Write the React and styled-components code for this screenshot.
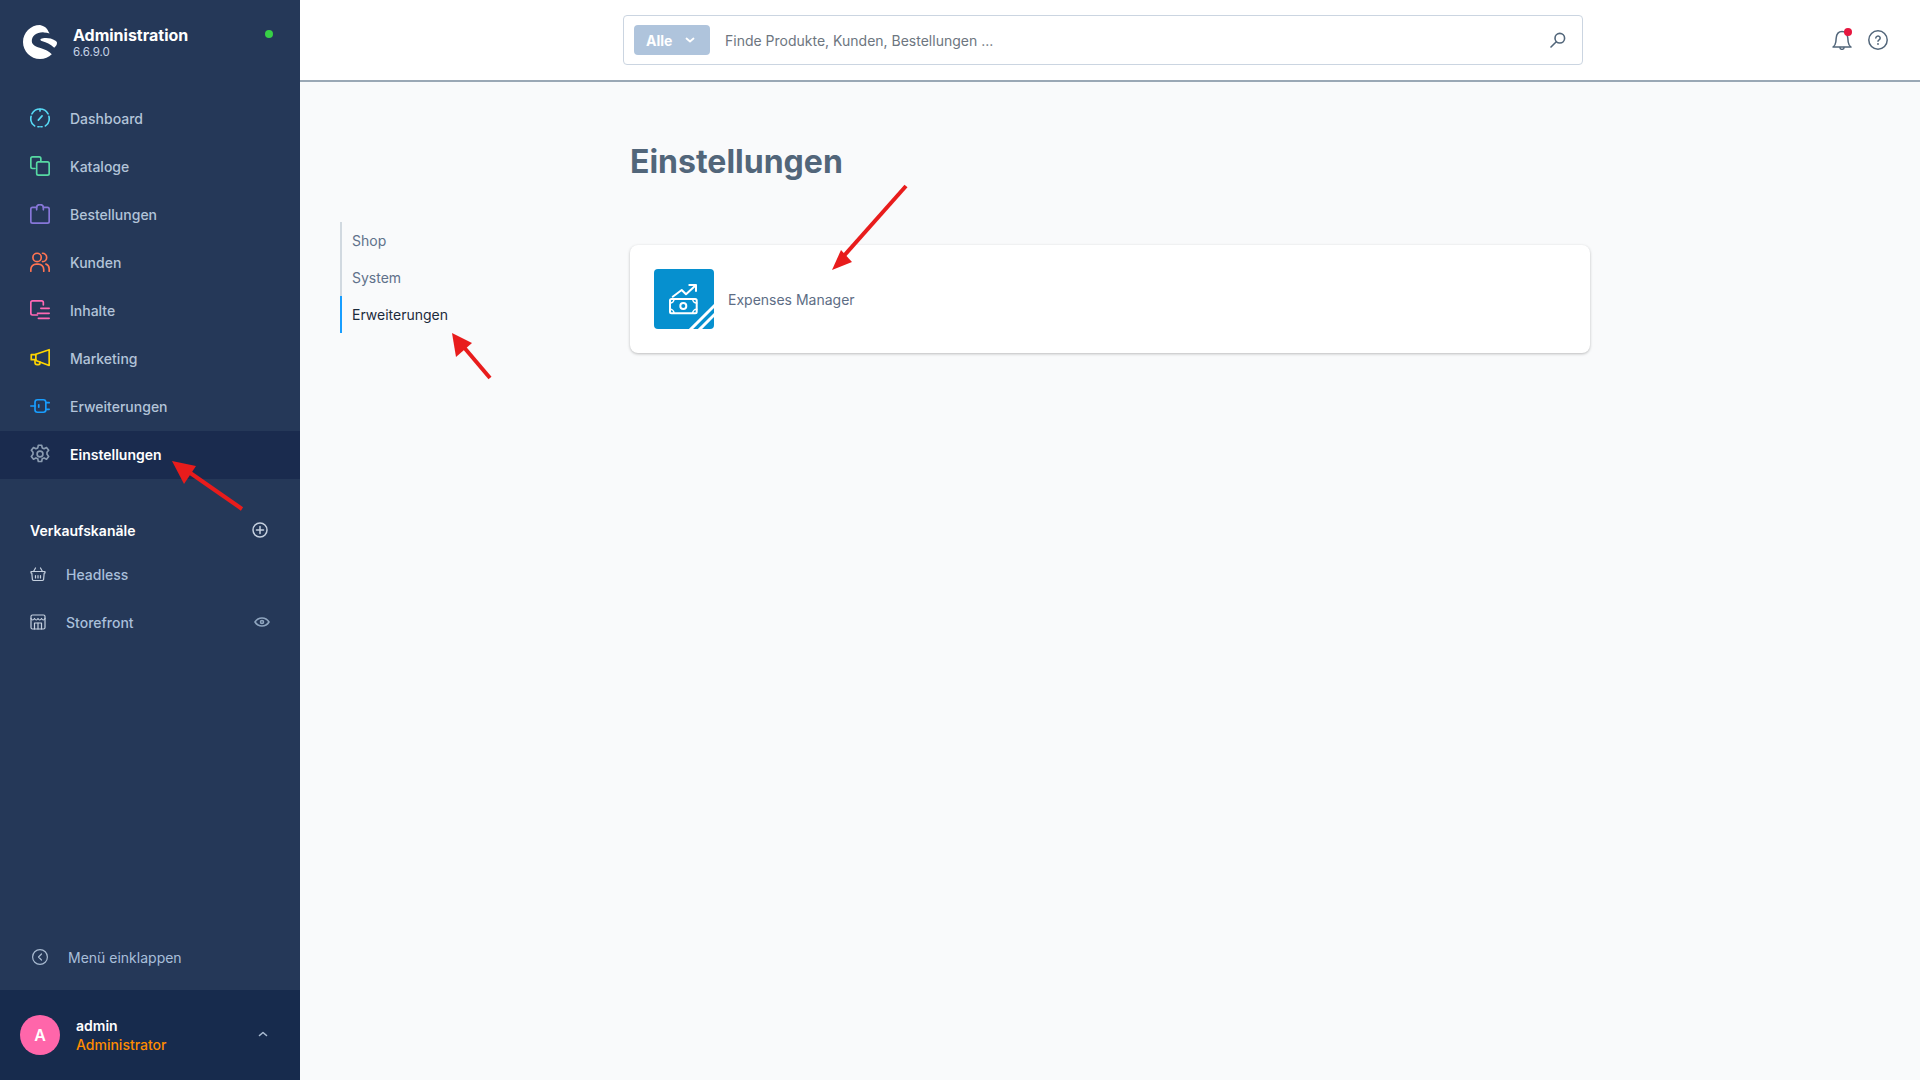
import React from 'react';
import styled, { createGlobalStyle } from 'styled-components';

const GlobalStyle = createGlobalStyle`
    * { box-sizing: border-box; }
    html, body { margin: 0; padding: 0; height: 100%; }
    body {
        font-family: Inter, "Noto Sans", sans-serif;
        background: #f9fafb;
        overflow: hidden;
    }
`;

const Line = ({ children, size = 24, color = 'currentColor', width = 2, view = '0 0 24 24' }) => (
    <svg width={size} height={size} viewBox={view} fill="none" stroke={color} strokeWidth={width} strokeLinecap="round" strokeLinejoin="round">
        {children}
    </svg>
);

const navItems = [
    {
        label: 'Dashboard', color: '#57d9f5',
        icon: <><path d="M5.500 21.500A11 11 0 0 1 1.300 10" /><path d="M2.300 7A11 11 0 0 1 21.700 7" /><path d="M22.700 10A11 11 0 0 1 18.500 21.500" /><path d="M9.500 22.500h1.500" /><path d="M13 22.500h1.500" /><path d="M10 14.500l4.500-5" /><path d="M12 1.500v2" /></>,
    },
    {
        label: 'Kataloge', color: '#57d9a3',
        icon: <><path d="M6 15H3a2 2 0 0 1-2-2V3a2 2 0 0 1 2-2h8a2 2 0 0 1 2 2v3" /><rect x="8" y="7" width="15" height="16" rx="2" /></>,
    },
    {
        label: 'Bestellungen', color: '#8777d9',
        icon: <><path d="M8 4H3a2 2 0 0 0-2 2v15a2 2 0 0 0 2 2h18a2 2 0 0 0 2-2V6a2 2 0 0 0-2-2h-5" /><path d="M8 7V4a3 2.500 0 0 1 8 0v3" /></>,
    },
    {
        label: 'Kunden', color: '#ff7452',
        icon: <><circle cx="8.500" cy="6.500" r="5" /><path d="M1 23v-2a6.500 6.500 0 0 1 6.500-6.500h2.500a6.500 6.500 0 0 1 6.500 6.500v2" /><path d="M15 1.500a5 5 0 0 1 0 10" /><path d="M19 14.500a6 6 0 0 1 4 5.500v3" /></>,
    },
    {
        label: 'Inhalte', color: '#ff68b4',
        icon: <><path d="M9 18H3a2 2 0 0 1-2-2V3a2 2 0 0 1 2-2h11a2 2 0 0 1 2 2v3" /><path d="M13 10h10" /><path d="M9 16h14" /><path d="M10 22h13" /></>,
    },
    {
        label: 'Marketing', color: '#ffd500',
        icon: <><path d="M7 8H1.500v6H7" /><path d="M7 7.500 23 2v19L7 15z" /><path d="M6 15v2.500a2.500 2.500 0 0 0 2.500 2.500H10a2 2 0 0 0 2-2v-1" /></>,
    },
    {
        label: 'Erweiterungen', color: '#189eff',
        icon: <><path d="M1 12h5" /><rect x="6" y="4.500" width="13" height="15" rx="3" /><path d="M19 8h4" /><path d="M19 16h4" /><path d="M10.500 10.500v3" /></>,
    },
    {
        label: 'Einstellungen', color: '#8a9bb0', active: true,
        icon: <><circle cx="12" cy="12" r="3.500" /><path d="M10 1.500h4l.7 3.200 2.200 1 2.900-1.500 2.600 3.300-2 2.500v2.400l2 2.500-2.600 3.300-2.900-1.500-2.200 1-.7 3.300h-4l-.7-3.300-2.200-1-2.900 1.500-2.600-3.300 2-2.500v-2.400l-2-2.500 2.600-3.300 2.900 1.500 2.200-1z" /></>,
    },
];

function App() {
    return (
        <Shell>
            <GlobalStyle />
            <Sidebar>
                <Brand>
                    <svg width="34" height="34" viewBox="0 0 34 34">
                        <path fill="#fff" d="M17 0C7.600 0 0 7.600 0 17s7.600 17 17 17c4.600 0 8.800-1.800 11.800-4.700-2.700-2.800-6.700-5-11.300-6.300-4.800-1.400-8.700-3-8.700-7 0-5 5-9 12-8.600 2 .1 4 .5 5.800 1.100C24 4 23.800 1.900 17 0z" />
                        <path fill="#fff" d="M19 13.500c4.600-.8 8.800-.5 13.500 2.300.9.500 1.500 1.200 1.500 2.200 0 2-1.500 3.500-2.800 4.800-4-3.800-7.800-5.500-11.700-6.500-2.300-.6-3-2.200-.5-2.800z" />
                    </svg>
                    <BrandText>
                        <BrandName>Administration</BrandName>
                        <BrandVersion>6.6.9.0</BrandVersion>
                    </BrandText>
                    <StatusDot />
                </Brand>
                <NavList>
                    {navItems.map((item) => (
                        <NavRow key={item.label} $active={item.active}>
                            <Line color={item.color} width={2}>{item.icon}</Line>
                            <span>{item.label}</span>
                        </NavRow>
                    ))}
                </NavList>
                <ChannelHead>
                    <span>Verkaufskanäle</span>
                    <Line size={16} color="#c5d0df" view="0 0 16 16" width={1.5}>
                        <circle cx="8" cy="8" r="7" /><path d="M8 4.500v7M4.500 8h7" />
                    </Line>
                </ChannelHead>
                <ChannelList>
                    <ChannelRow>
                        <Line size={16} color="#c5d0df" view="0 0 16 16" width={1.2}>
                            <path d="M1 5.500h14v1.500h-.8l-.6 6.500a1.500 1.500 0 0 1-1.500 1H3.900a1.500 1.500 0 0 1-1.500-1L1.800 7H1z" /><path d="M3.500 5.500 5.500 2M12.500 5.500 10.500 2" /><path d="M5.500 9.500v2.500M8 9.500v2.500M10.500 9.500v2.500" />
                        </Line>
                        <ChannelLabel>Headless</ChannelLabel>
                    </ChannelRow>
                    <ChannelRow>
                        <Line size={16} color="#c5d0df" view="0 0 16 16" width={1.2}>
                            <rect x="1" y="1" width="14" height="14" rx="1.500" /><path d="M1 4.500q1.750 3 3.500 0q1.750 3 3.500 0q1.750 3 3.500 0q1.750 3 3.500 0" /><path d="M4.500 15V9h7v6" /><path d="M8 9v6" />
                        </Line>
                        <ChannelLabel>Storefront</ChannelLabel>
                        <EyeSlot>
                            <Line size={16} color="#8fa5bf" view="0 0 16 16" width={1.6}>
                                <path d="M1 8s2.500-4 7-4 7 4 7 4-2.500 4-7 4-7-4-7-4z" /><circle cx="8" cy="8" r="1.500" />
                            </Line>
                        </EyeSlot>
                    </ChannelRow>
                </ChannelList>
                <Collapse>
                    <Line size={16} color="#a9bbd1" view="0 0 16 16" width={1.2}>
                        <circle cx="8" cy="8" r="7.400" /><path d="M9.500 5 6.500 8l3 3" />
                    </Line>
                    <span>Menü einklappen</span>
                </Collapse>
                <UserBar>
                    <Avatar>A</Avatar>
                    <UserText>
                        <UserName>admin</UserName>
                        <UserRole>Administrator</UserRole>
                    </UserText>
                    <Line size={10} color="#a9bbd1" view="0 0 10 10" width={1.6}>
                        <path d="M1.500 5.500 5 2.500l3.500 3" />
                    </Line>
                </UserBar>
            </Sidebar>

            <Main>
                <TopBar>
                    <SearchBox>
                        <TypeButton>
                            Alle
                            <Line size={10} color="#fff" view="0 0 10 10" width={1.8}>
                                <path d="M1.500 3.500 5 6.500l3.500-3" />
                            </Line>
                        </TypeButton>
                        <Placeholder>Finde Produkte, Kunden, Bestellungen ...</Placeholder>
                        <Line size={16} color="#52667a" view="0 0 16 16" width={1.6}>
                            <circle cx="9.800" cy="6.200" r="4.800" /><path d="M6.300 9.700 1 15" />
                        </Line>
                    </SearchBox>
                    <TopActions>
                        <BellWrap>
                            <Line size={20} color="#52667a" view="0 0 20 20" width={1.5}>
                                <path d="M1 17c1.500-1 2.500-2.500 2.800-5l.4-4C4.600 4 7 1.500 10 1.500S15.400 4 15.800 8l.4 4c.3 2.500 1.300 4 2.800 5z" /><path d="M8 17.500v.2a2 1.600 0 0 0 4 0v-.2" />
                            </Line>
                            <BellDot />
                        </BellWrap>
                        <Line size={20} color="#52667a" view="0 0 20 20" width={1.5}>
                            <circle cx="10" cy="10" r="9.200" /><path d="M7.800 8a2.200 2 0 1 1 3.300 1.800c-.8.500-1.100.9-1.100 1.500" /><path d="M10 14v.1" strokeWidth="1.800" />
                        </Line>
                    </TopActions>
                </TopBar>
                <Content>
                    <Tabs>
                        <Tab>Shop</Tab>
                        <Tab>System</Tab>
                        <Tab $active>Erweiterungen</Tab>
                    </Tabs>
                    <Body>
                        <Title>Einstellungen</Title>
                        <Card>
                            <AppIcon>
                                <svg width="60" height="60" viewBox="0 0 60 60" fill="none" stroke="#fff" strokeWidth="2" strokeLinecap="round" strokeLinejoin="round">
                                    <path d="M18.700 27.700 27.700 21l4.300 4.300 9-8.300" />
                                    <path d="M35.300 16H42v6" />
                                    <rect x="16" y="30" width="26.700" height="14.300" rx="1.500" />
                                    <circle cx="29.300" cy="37" r="3" />
                                    <path d="M16 34a4 4 0 0 0 4-4M42.700 34a4 4 0 0 1-4-4M16 40.300a4 4 0 0 1 4 4M42.700 40.300a4 4 0 0 0-4 4" strokeWidth="1.600" />
                                    <path d="M35 62 62 35" strokeWidth="3" strokeLinecap="butt" />
                                    <path d="M44 62 62 44" strokeWidth="3" strokeLinecap="butt" />
                                </svg>
                            </AppIcon>
                            <CardLabel>Expenses Manager</CardLabel>
                        </Card>
                    </Body>
                </Content>
            </Main>

            <ArrowLayer width="1920" height="1080" viewBox="0 0 1920 1080">
                <g stroke="#e81c1c" strokeWidth="4" fill="#e81c1c">
                    <path d="M242 509 186 470" fill="none" />
                    <path d="M172 461 196 466 184 484z" stroke="none" />
                    <path d="M490 378 462 345" fill="none" />
                    <path d="M452 333 472 343 456 357z" stroke="none" />
                    <path d="M906 186 842 258" fill="none" />
                    <path d="M832 270 841 250 852 262z" stroke="none" />
                </g>
            </ArrowLayer>
        </Shell>
    );
}

const Shell = styled.div`
    position: relative;
    display: grid;
    grid-template-columns: 300px 1fr;
    width: 1920px;
    height: 1080px;
    overflow: hidden;
`;

const Sidebar = styled.aside`
    display: flex;
    flex-direction: column;
    background: #253858;
    color: #b3c4d9;
`;

const Brand = styled.div`
    display: flex;
    align-items: center;
    height: 95px;
    padding: 0 27px 11px 23px;
`;

const BrandText = styled.div`
    display: flex;
    flex-direction: column;
    margin-left: 16px;
    flex: 1;
`;

const BrandName = styled.div`
    font-size: 16px;
    font-weight: 700;
    line-height: 20px;
    color: #fff;
`;

const BrandVersion = styled.div`
    font-size: 11.5px;
    line-height: 15px;
    color: #c5d3e6;
`;

const StatusDot = styled.span`
    align-self: flex-start;
    width: 8px;
    height: 8px;
    margin-top: 30px;
    border-radius: 50%;
    background: #37d046;
`;

const NavList = styled.nav`
    display: flex;
    flex-direction: column;
`;

const NavRow = styled.div`
    display: flex;
    align-items: center;
    gap: 20px;
    height: 48px;
    padding: 0 30px 2px;
    font-size: 14px;
    font-weight: ${(p) => (p.$active ? 600 : 500)};
    color: ${(p) => (p.$active ? '#fff' : '#b3c4d9')};
    background: ${(p) => (p.$active ? '#1a2b4e' : 'transparent')};

    svg { width: 20px; height: 20px; flex: none; }
`;

const ChannelHead = styled.div`
    display: flex;
    align-items: center;
    justify-content: space-between;
    height: 24px;
    margin-top: 39px;
    padding: 0 32px 0 30px;
    font-size: 14px;
    font-weight: 600;
    color: #fff;
`;

const ChannelList = styled.div`
    display: flex;
    flex-direction: column;
    margin-top: 8px;
`;

const ChannelRow = styled.div`
    display: flex;
    align-items: center;
    height: 48px;
    padding: 0 30px;
    font-size: 14px;
    font-weight: 500;
    color: #a9bfda;
`;

const ChannelLabel = styled.span`
    margin-left: 20px;
    flex: 1;
`;

const EyeSlot = styled.span`
    display: flex;
`;

const Collapse = styled.div`
    display: flex;
    align-items: center;
    gap: 20px;
    height: 48px;
    margin-top: auto;
    margin-bottom: 8px;
    padding: 0 0 2px 32px;
    font-size: 14px;
    color: #a9bfda;
`;

const UserBar = styled.div`
    display: flex;
    align-items: center;
    height: 90px;
    padding: 0 32px 0 20px;
    background: #172b4d;
`;

const Avatar = styled.div`
    display: flex;
    align-items: center;
    justify-content: center;
    width: 40px;
    height: 40px;
    border-radius: 50%;
    background: #ff66aa;
    color: #fff;
    font-size: 16px;
    font-weight: 600;
`;

const UserText = styled.div`
    display: flex;
    flex-direction: column;
    flex: 1;
    margin-left: 16px;
`;

const UserName = styled.div`
    font-size: 14px;
    font-weight: 600;
    line-height: 18px;
    color: #fff;
`;

const UserRole = styled.div`
    font-size: 14px;
    font-weight: 500;
    line-height: 19px;
    color: #ff8b00;
`;

const Main = styled.main`
    display: flex;
    flex-direction: column;
    min-width: 0;
`;

const TopBar = styled.header`
    display: flex;
    align-items: center;
    height: 82px;
    padding: 0 32px 0 323px;
    background: #fff;
    border-bottom: 2px solid #9aa8b5;
`;

const SearchBox = styled.div`
    display: flex;
    align-items: center;
    width: 960px;
    height: 50px;
    padding: 0 16px 0 10px;
    border: 1px solid #cbd5e1;
    border-radius: 4px;
    background: #fff;
`;

const TypeButton = styled.div`
    display: flex;
    align-items: center;
    justify-content: space-between;
    width: 76px;
    height: 30px;
    padding: 0 15px 0 12px;
    border-radius: 4px;
    background: #afc4dc;
    color: #fff;
    font-size: 14px;
    font-weight: 700;
`;

const Placeholder = styled.div`
    flex: 1;
    margin-left: 15px;
    font-size: 14px;
    color: #6d7680;
`;

const TopActions = styled.div`
    display: flex;
    align-items: center;
    gap: 16px;
    margin-left: auto;
`;

const BellWrap = styled.div`
    position: relative;
    display: flex;
`;

const BellDot = styled.span`
    position: absolute;
    top: -2px;
    right: 0;
    width: 8px;
    height: 8px;
    border-radius: 50%;
    background: #e6173f;
`;

const Content = styled.div`
    display: flex;
    flex: 1;
    background: #f9fafb;
    padding-left: 40px;
`;

const Tabs = styled.div`
    display: flex;
    flex-direction: column;
    width: 290px;
    margin-top: 140px;
`;

const Tab = styled.div`
    display: flex;
    align-items: center;
    height: 37px;
    padding-left: 10px;
    border-left: 2px solid ${(p) => (p.$active ? '#189eff' : '#d1d9e0')};
    font-size: 14px;
    color: ${(p) => (p.$active ? '#1b2a3c' : '#60718a')};
`;

const Body = styled.div`
    display: flex;
    flex-direction: column;
    width: 960px;
`;

const Title = styled.h1`
    margin: 59px 0 0;
    font-size: 32px;
    line-height: 42px;
    font-weight: 700;
    color: #52667a;
`;

const Card = styled.div`
    display: flex;
    align-items: center;
    height: 108px;
    margin-top: 62px;
    padding-left: 24px;
    border-radius: 8px;
    background: #fff;
    box-shadow: 0 1px 3px rgba(0, 0, 0, 0.25);
`;

const AppIcon = styled.div`
    width: 60px;
    height: 60px;
    overflow: hidden;
    border-radius: 4px;
    background: #0690cf;

    svg { display: block; }
`;

const CardLabel = styled.div`
    margin-left: 14px;
    font-size: 14px;
    color: #5d6d85;
`;

const ArrowLayer = styled.svg`
    position: absolute;
    top: 0;
    left: 0;
    pointer-events: none;
`;

export default App;
